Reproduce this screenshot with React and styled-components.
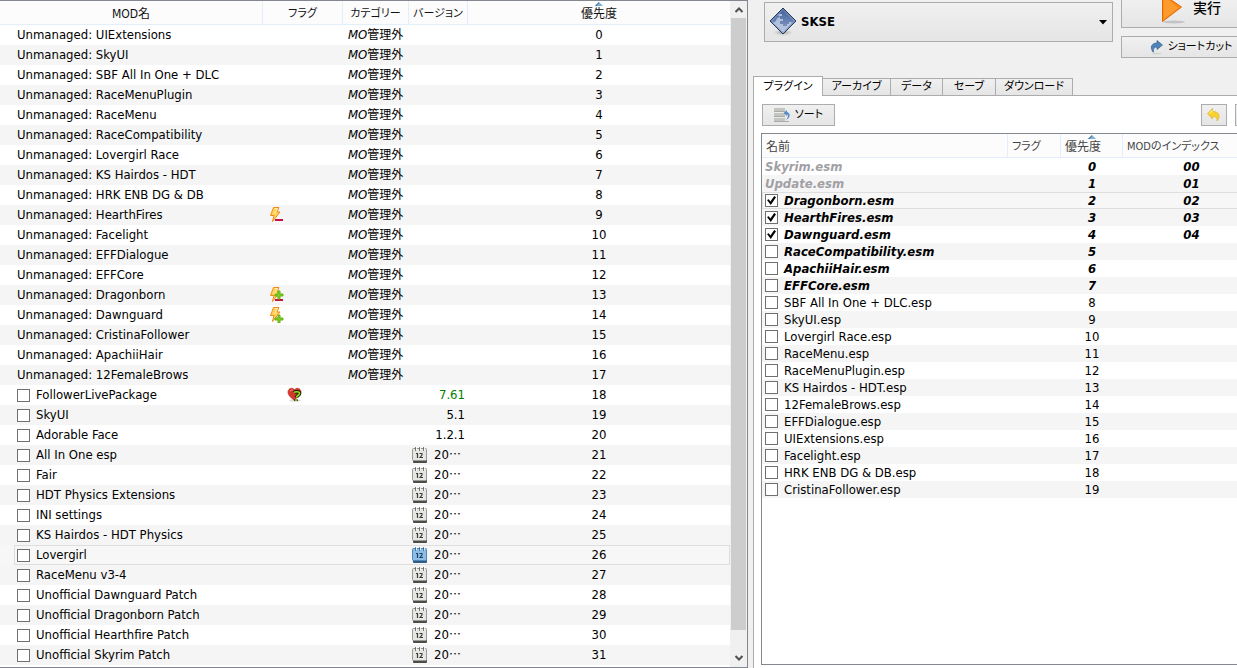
import { useState } from "react";
import styled, { createGlobalStyle, css } from "styled-components";

const unmanaged = [
  "UIExtensions",
  "SkyUI",
  "SBF All In One + DLC",
  "RaceMenuPlugin",
  "RaceMenu",
  "RaceCompatibility",
  "Lovergirl Race",
  "KS Hairdos - HDT",
  "HRK ENB DG & DB",
  "HearthFires",
  "Facelight",
  "EFFDialogue",
  "EFFCore",
  "Dragonborn",
  "Dawnguard",
  "CristinaFollower",
  "ApachiiHair",
  "12FemaleBrows",
];

const conflicts = {
  HearthFires: "minus",
  Dragonborn: "both",
  Dawnguard: "plus",
};

const managed = [
  { name: "FollowerLivePackage", version: "7.61", upToDate: true, note: true },
  { name: "SkyUI", version: "5.1" },
  { name: "Adorable Face", version: "1.2.1" },
  { name: "All In One esp", dated: true },
  { name: "Fair", dated: true },
  { name: "HDT Physics Extensions", dated: true },
  { name: "INI settings", dated: true },
  { name: "KS Hairdos - HDT Physics", dated: true },
  { name: "Lovergirl", dated: true, current: true },
  { name: "RaceMenu v3-4", dated: true },
  { name: "Unofficial Dawnguard Patch", dated: true },
  { name: "Unofficial Dragonborn Patch", dated: true },
  { name: "Unofficial Hearthfire Patch", dated: true },
  { name: "Unofficial Skyrim Patch", dated: true },
];

const plugins = [
  { name: "Skyrim.esm", master: true, locked: true, index: "00" },
  { name: "Update.esm", master: true, locked: true, index: "01" },
  { name: "Dragonborn.esm", master: true, on: true, index: "02", current: true },
  { name: "HearthFires.esm", master: true, on: true, index: "03" },
  { name: "Dawnguard.esm", master: true, on: true, index: "04" },
  { name: "RaceCompatibility.esm", master: true },
  { name: "ApachiiHair.esm", master: true },
  { name: "EFFCore.esm", master: true },
  { name: "SBF All In One + DLC.esp" },
  { name: "SkyUI.esp" },
  { name: "Lovergirl Race.esp" },
  { name: "RaceMenu.esp" },
  { name: "RaceMenuPlugin.esp" },
  { name: "KS Hairdos - HDT.esp" },
  { name: "12FemaleBrows.esp" },
  { name: "EFFDialogue.esp" },
  { name: "UIExtensions.esp" },
  { name: "Facelight.esp" },
  { name: "HRK ENB DG & DB.esp" },
  { name: "CristinaFollower.esp" },
];

const tabs = [
  { label: "プラグイン", width: 70 },
  { label: "アーカイブ", width: 68 },
  { label: "データ", width: 52 },
  { label: "セーブ", width: 53 },
  { label: "ダウンロード", width: 77 },
];

export default function App() {
  return (
    <>
      <GlobalStyle />
      <Window>
        <ModList />
        <SidePane>
          <Launcher />
          <PluginPane />
        </SidePane>
      </Window>
    </>
  );
}

function ModList() {
  return (
    <ListFrame>
      <Table $row={20}>
        <colgroup>
          <Col $w={263} />
          <Col $w={80} />
          <Col $w={66} />
          <Col $w={59} />
          <col />
        </colgroup>
        <thead>
          <tr>
            <Th>MOD名</Th>
            <Th $kana>フラグ</Th>
            <Th $kana>カテゴリー</Th>
            <Th $kana>バージョン</Th>
            <Th $last>
              <SortMark />
              優先度
            </Th>
          </tr>
        </thead>
        <tbody>
          {unmanaged.map((name, i) => (
            <Row key={name}>
              <td>
                <NameBox $indent={14}>Unmanaged: {name}</NameBox>
              </td>
              <td>
                <Flags>{conflicts[name] && <BoltIcon kind={conflicts[name]} />}</Flags>
              </td>
              <Category>
                <em>MO</em>
                <Kanji>管理外</Kanji>
              </Category>
              <td />
              <Num>{i}</Num>
            </Row>
          ))}
          {managed.map((mod, i) => (
            <Row key={mod.name} $current={mod.current}>
              <td>
                <NameBox as="label" $indent={14} $current={mod.current}>
                  <Check />
                  {mod.name}
                </NameBox>
              </td>
              <td>
                <Flags>
                  <span />
                  {mod.note && <HeartIcon />}
                </Flags>
              </td>
              <td />
              <td>
                {mod.dated ? (
                  <DateVersion>
                    <CalendarIcon blue={mod.current} />
                    <span>
                      20<Kanji>…</Kanji>
                    </span>
                  </DateVersion>
                ) : (
                  <Version $ok={mod.upToDate}>{mod.version}</Version>
                )}
              </td>
              <Num>{unmanaged.length + i}</Num>
            </Row>
          ))}
        </tbody>
      </Table>
      <ScrollBar>
        <Chevron d="M1.5 6 5 2.5 8.5 6" />
        <Thumb />
        <Chevron d="M1.5 2 5 5.5 8.5 2" />
      </ScrollBar>
    </ListFrame>
  );
}

function Launcher() {
  return (
    <LaunchBar>
      <Combo>
        <SkseIcon />
        <select aria-label="SKSE" defaultValue="SKSE">
          <option>SKSE</option>
        </select>
        <svg width="8" height="5" viewBox="0 0 8 5">
          <path d="M0 0h8L4 4.5z" fill="#000" />
        </svg>
      </Combo>
      <LaunchButtons>
        <RunButton>
          <RunIcon />
          実行
        </RunButton>
        <Button>
          <ShortcutIcon />
          ショートカット
        </Button>
      </LaunchButtons>
    </LaunchBar>
  );
}

function PluginPane() {
  const [active, setActive] = useState(0);

  return (
    <>
      <TabBar role="tablist">
        {tabs.map((tab, i) => (
          <Tab
            key={tab.label}
            role="tab"
            aria-selected={i === active}
            $active={i === active}
            $w={tab.width}
            onClick={() => setActive(i)}
          >
            {tab.label}
          </Tab>
        ))}
      </TabBar>
      <TabPage>
        <Toolbar>
          <SortButton>
            <SortIcon />
            ソート
          </SortButton>
          <Spacer />
          <IconButton aria-label="restore">
            <UndoIcon />
          </IconButton>
          <IconButton aria-label="backup" />
        </Toolbar>
        <PluginFrame>
          <Table $row={17}>
            <colgroup>
              <col />
              <Col $w={53} />
              <Col $w={62} />
              <Col $w={137} />
            </colgroup>
            <thead>
              <tr>
                <Th $left>名前</Th>
                <Th $left $kana>
                  フラグ
                </Th>
                <Th $left>
                  <SortMark />
                  優先度
                </Th>
                <Th $left $kana $last>
                  MODのインデックス
                </Th>
              </tr>
            </thead>
            <tbody>
              {plugins.map((p, i) => (
                <Row key={p.name} $current={p.current} $master={p.master}>
                  <td>
                    <NameBox
                      as={p.locked ? "div" : "label"}
                      $current={p.current}
                      $locked={p.locked}
                    >
                      {!p.locked && <Check defaultChecked={p.on} />}
                      {p.name}
                    </NameBox>
                  </td>
                  <td />
                  <Num>{i}</Num>
                  <Num>{p.index}</Num>
                </Row>
              ))}
            </tbody>
          </Table>
        </PluginFrame>
      </TabPage>
    </>
  );
}

function SortMark() {
  return (
    <Mark width="8" height="4" viewBox="0 0 8 4">
      <path d="M0 4 4 0l4 4z" fill="#7fb0cf" />
      <path d="M0 4 4 0v1L1.5 4z" fill="#3c6f90" />
    </Mark>
  );
}

function Chevron({ d }) {
  return (
    <svg width="10" height="8" viewBox="0 0 10 8">
      <path d={d} fill="none" stroke="#505050" strokeWidth="2" />
    </svg>
  );
}

function Check(props) {
  return <CheckBox type="checkbox" {...props} />;
}

function BoltIcon({ kind }) {
  return (
    <svg width="16" height="16" viewBox="0 0 16 16">
      <path
        d="M4.5.5h5.500L8 5h3L3.500 14.500 5 8.500H1.500z"
        fill="#ffd25c"
        stroke="#f08a1c"
      />
      <path d="M6 1.500h2.500L5.500 6.500" fill="none" stroke="#fff3b8" />
      {kind !== "plus" && <path d="M6 12h8v2H6z" fill="#c5123f" />}
      {kind !== "minus" && (
        <path
          d={
            kind === "both"
              ? "M9 4h2v3h3v2h-3v3H9V9H6V7h3z"
              : "M9 8h2v3h3v2h-3v3H9v-3H6v-2h3z"
          }
          fill="#7ccb1c"
          stroke="#6ab31a"
        />
      )}
    </svg>
  );
}

function HeartIcon() {
  return (
    <svg width="16" height="16" viewBox="0 0 16 16">
      <ellipse cx="8" cy="13.500" rx="6" ry="1.500" fill="#ddd" />
      <path
        d="M7 13C3 10 1 8 1 5c0-4 5-5 6.500-2C9 0 14 1 14 5c0 3-3 5-7 8z"
        fill="#d8352a"
        stroke="#a32820"
        strokeWidth=".6"
      />
      <path d="M3 4.500c.5-1.500 2-2 3-1" fill="none" stroke="#f39a86" />
      <path
        d="M7 5.500c1-1 5.500-1.500 5.500 1 0 2-2.500 1.500-3 4M9 12.500v1.500"
        fill="none"
        stroke="#172206"
        strokeWidth="3.600"
      />
      <path
        d="M7 5.500c1-1 5.500-1.500 5.500 1 0 2-2.500 1.500-3 4M9 12.500v1.500"
        fill="none"
        stroke="#9ade1f"
        strokeWidth="1.600"
      />
    </svg>
  );
}

function CalendarIcon({ blue }) {
  const paper = blue ? "#8dbde6" : "#e6e6e3";
  const edge = blue ? "#4f87b8" : "#999995";
  const base = blue ? "#2f5d88" : "#4c4c49";
  const ink = blue ? "#1c4468" : "#3a3a38";
  return (
    <svg width="16" height="16" viewBox="0 0 16 16">
      <rect x="1" y="12" width="14" height="4" rx="1" fill={base} />
      <rect x=".5" y="1.500" width="14" height="12" rx="1" fill={paper} stroke={edge} />
      <path d="M3.500 0v4M7.500 0v4M11.500 0v4" stroke={base} strokeOpacity=".7" />
      <path d="M4.500 0v3M8.500 0v3M12.500 0v3" stroke="#fff" strokeOpacity=".8" />
      <path d="M4 6.500h1.500V11" fill="none" stroke={ink} strokeWidth="1.200" />
      <path
        d="M7.500 6.500h2.500v1.500L8 10.500h3"
        fill="none"
        stroke={ink}
        strokeWidth="1.100"
      />
    </svg>
  );
}

function SkseIcon() {
  return (
    <svg width="28" height="30" viewBox="0 0 28 30">
      <defs>
        <linearGradient id="gem" x1="0" y1="0" x2="0" y2="1">
          <stop offset="0" stopColor="#3e5f98" />
          <stop offset="1" stopColor="#8fa6cf" />
        </linearGradient>
        <radialGradient id="shade">
          <stop offset="0" stopColor="#8c8c8c" />
          <stop offset="1" stopColor="#e8e8e8" stopOpacity="0" />
        </radialGradient>
      </defs>
      <ellipse cx="14" cy="25.500" rx="12" ry="4" fill="url(#shade)" />
      <path d="M14 1 27 14 14 27 1 14z" fill="url(#gem)" stroke="#29395c" />
      <path
        d="M10 7h3v2h-2v3h3v2h-3v3h3v2h4v-2h2v-2h2l1 1-9 9-10-9 3-2 1-3 3-1-2-2z"
        fill="#c3cfe6"
        opacity=".8"
      />
      <path d="M14 2.500 25.500 14 14 25.500 2.500 14z" fill="none" stroke="#9fb1d4" strokeWidth=".6" />
    </svg>
  );
}

function RunIcon() {
  return (
    <svg width="24" height="24" viewBox="0 0 24 24">
      <ellipse cx="13" cy="22" rx="11" ry="1.500" fill="#c4c4c4" />
      <path d="M1.500-6 20.500 7 1.500 21.500z" fill="#fb8c17" stroke="#dc6a08" />
      <path d="M3-4v23L17 8z" fill="#ffa53c" opacity=".6" />
    </svg>
  );
}

function ShortcutIcon() {
  return (
    <svg width="14" height="15" viewBox="0 0 14 15">
      <ellipse cx="6.500" cy="13.500" rx="5" ry="1" fill="#d5d5d5" />
      <path
        d="M3 12C-.5 7 2 3 7 3V.5L12.500 5 7 9.500V7C4 7 3 8.500 3.500 12z"
        fill="#4f83ba"
        stroke="#406a94"
        strokeWidth=".8"
      />
    </svg>
  );
}

function SortIcon() {
  return (
    <svg width="17" height="14" viewBox="0 0 17 14">
      <path d="M0 0h11v4H0zM0 5h11v4H0zM0 10h11v4H0z" fill="#c3c6c0" />
      <path d="M0 3h11v1H0zM0 8h11v1H0zM0 13h15v1H0z" fill="#a9aca6" />
      <path d="M12 12c2-2 2.500-5 1-6v2L9.500 5 13 2v2c4 1 3.500 6-1 8z" fill="#5b8cc4" />
    </svg>
  );
}

function UndoIcon() {
  return (
    <svg width="16" height="16" viewBox="0 0 16 16">
      <path
        d="M6.500 1.500v3C13 4.500 15 9 11 14c.5-3.500-1-4.500-4.500-4.500v2.500L1.500 6.500z"
        fill="#f8d32c"
        stroke="#dfb52a"
        strokeWidth=".8"
      />
      <path d="M3 6.500 6 3.500v2" fill="none" stroke="#fff2a0" />
    </svg>
  );
}

const GlobalStyle = createGlobalStyle`
  * {
    box-sizing: border-box;
  }

  body {
    margin: 0;
    background: #f0f0f0;
    overflow: hidden;
  }

  body, button, select {
    font-family: "DejaVu Sans Condensed", "Noto Sans CJK JP", sans-serif;
    font-size: 13px;
    line-height: 16px;
    color: #000;
    font-feature-settings: "palt";
  }

  svg {
    display: block;
    flex: none;
  }
`;

const Window = styled.main`
  display: grid;
  grid-template-columns: minmax(0, 748fr) minmax(0, 489fr);
  height: 100vh;
  overflow: hidden;
`;

const ListFrame = styled.section`
  display: flex;
  min-width: 0;
  overflow: hidden;
  background: #fff;
  border: solid #828790;
  border-width: 1px 1px 1px 0;
`;

const Col = styled.col`
  width: ${(p) => p.$w}px;
`;

const Table = styled.table`
  flex: 1;
  align-self: flex-start;
  width: 100%;
  min-width: 0;
  table-layout: fixed;
  border-collapse: separate;
  border-spacing: 0;

  td {
    height: ${(p) => p.$row}px;
    padding: 0;
    line-height: ${(p) => p.$row}px;
    white-space: nowrap;
  }
`;

const Th = styled.th`
  position: relative;
  height: 24px;
  padding: ${(p) => (p.$left ? "2px 0 0 4px" : "2px 0 0")};
  text-align: ${(p) => (p.$left ? "left" : "center")};
  font-size: ${(p) => (p.$kana ? 11 : 12)}px;
  font-weight: 400;
  white-space: nowrap;
  color: ${(p) => (p.$left ? "#444" : "#111")};
  background: #fcfcfc;
  border-bottom: 1px solid #e3eefb;
  border-right: ${(p) => (p.$last ? "0" : "1px solid #e3eefb")};
`;

const Mark = styled.svg`
  position: absolute;
  top: 1px;
  left: calc(50% - 4px);
`;

const Row = styled.tr`
  font-weight: ${(p) => (p.$master ? 700 : 400)};
  font-style: ${(p) => (p.$master ? "italic" : "normal")};

  &:nth-child(even) {
    background: #f5f5f5;
  }

  ${(p) =>
    p.$current &&
    css`
      background: #f7f7f7;

      td + td {
        box-shadow: inset 0 1px #dedede, inset 0 -1px #dedede;
      }

      td:last-child {
        box-shadow: inset -1px 1px #dedede, inset 0 -1px #dedede;
      }
    `}
`;

const NameBox = styled.div`
  display: flex;
  align-items: center;
  gap: 6px;
  height: 100%;
  margin-left: ${(p) => p.$indent || 0}px;
  padding-left: 3px;
  color: ${(p) => (p.$locked ? "#a0a0a4" : "inherit")};
  box-shadow: ${(p) =>
    p.$current ? "inset 1px 1px #dedede, inset 0 -1px #dedede" : "none"};
`;

const CheckBox = styled.input`
  appearance: none;
  display: grid;
  place-items: center;
  flex: none;
  width: 13px;
  height: 13px;
  margin: 0;
  background: #fff;
  border: 1px solid #707070;

  &:checked::before {
    content: "";
    width: 9px;
    height: 9px;
    background: #000;
    clip-path: polygon(0 45%, 20% 35%, 38% 60%, 80% 0, 100% 15%, 42% 100%);
  }
`;

const Flags = styled.div`
  display: grid;
  grid-template-columns: 18px 18px;
  padding-left: 6px;
`;

const Category = styled.td`
  text-indent: 5px;
`;

const Kanji = styled.span`
  font-family: "Noto Sans CJK JP", sans-serif;
  font-size: 12px;
  line-height: 1;
`;

const Version = styled.div`
  padding-right: 3px;
  text-align: right;
  color: ${(p) => (p.$ok ? "#008000" : "inherit")};
`;

const DateVersion = styled.div`
  display: flex;
  align-items: center;
  gap: 6px;
  padding-left: 3px;
`;

const Num = styled.td`
  text-align: center;
`;

const ScrollBar = styled.div`
  display: flex;
  flex-direction: column;
  align-items: center;
  justify-content: space-between;
  flex: none;
  width: 17px;
  padding: 5px 0;
  background: #f0f0f0;
`;

const Thumb = styled.div`
  flex: 1;
  align-self: stretch;
  margin: 4px 1px 24px;
  background: #cdcdcd;
`;

/* wider than its column, the right edge runs out of the window */
const SidePane = styled.section`
  display: flex;
  flex-direction: column;
  min-width: 520px;
  padding-left: 5px;
`;

const LaunchBar = styled.div`
  display: flex;
  align-items: flex-start;
  gap: 8px;
  height: 76px;
  padding: 0 7px 0 11px;
`;

const face = css`
  border: 1px solid #acacac;
  background: linear-gradient(#f0f0f0, #e5e5e5);
`;

const Combo = styled.div`
  ${face}
  display: flex;
  align-items: center;
  flex: 1;
  gap: 4px;
  height: 40px;
  margin-top: 2px;
  padding: 0 5px 0 4px;

  select {
    appearance: none;
    flex: 1;
    height: 100%;
    padding: 0;
    border: 0;
    background: none;
    font-weight: 700;
  }
`;

const LaunchButtons = styled.div`
  display: flex;
  flex-direction: column;
  gap: 8px;
  width: 140px;
`;

const Button = styled.button`
  ${face}
  display: flex;
  align-items: center;
  justify-content: center;
  gap: 4px;
  height: 22px;
  padding: 0;
  font-size: 11px;
  white-space: nowrap;
`;

const RunButton = styled(Button)`
  align-items: flex-start;
  gap: 8px;
  height: 28px;
  border-top: 0;
  font-size: 14px;
  font-weight: 500;
`;

const TabBar = styled.div`
  display: flex;
  align-items: flex-end;
  height: 19px;
`;

const Tab = styled.button`
  ${face}
  width: ${(p) => p.$w}px;
  height: 17px;
  padding: 0;
  border-bottom: 0;
  border-left-width: 0;
  font-size: 11px;
  line-height: 16px;
  white-space: nowrap;

  ${(p) =>
    p.$active &&
    css`
      z-index: 1;
      height: 20px;
      margin-bottom: -1px;
      border-left-width: 1px;
      background: #fff;
    `}
`;

const TabPage = styled.div`
  display: flex;
  flex-direction: column;
  flex: 1;
  min-height: 0;
  padding: 8px 7px 3px;
  background: #fff;
  border: solid #acacac;
  border-width: 1px 0 0 1px;
`;

const Toolbar = styled.div`
  display: flex;
  gap: 8px;
  padding-left: 1px;
  margin-bottom: 7px;
`;

const SortButton = styled(Button)`
  width: 73px;
`;

const IconButton = styled(Button)`
  width: 26px;
`;

const Spacer = styled.div`
  flex: 1;
`;

const PluginFrame = styled.div`
  flex: 1;
  min-height: 0;
  overflow: hidden;
  border: 1px solid #828790;
`;
